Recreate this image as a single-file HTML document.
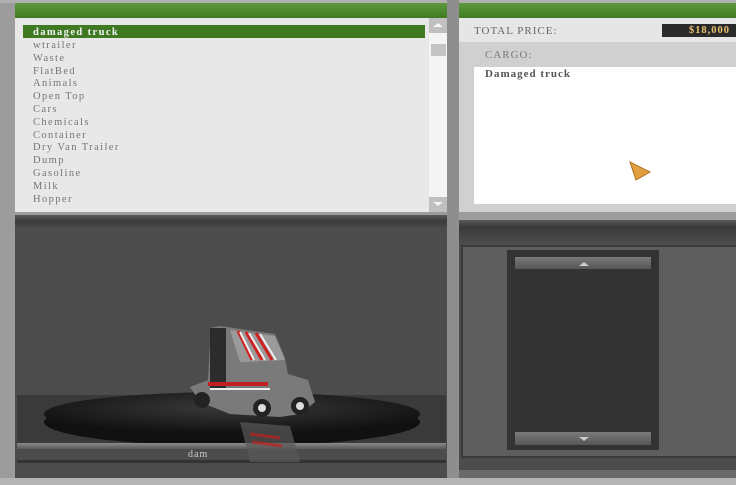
<!DOCTYPE html>
<html><head><style>
*{margin:0;padding:0;box-sizing:border-box}
body{width:736px;height:485px;overflow:hidden;background:#9c9c9c;position:relative;font-family:"Liberation Serif",serif}
div{position:absolute}
.t{font-size:10.5px;letter-spacing:1.4px;color:#767676;left:33px;line-height:12.8px}
</style></head><body>
<div style="left:0;top:0;width:736px;height:3px;background:#b0b0b0"></div>
<div style="left:15px;top:3px;width:432px;height:15px;background:linear-gradient(#5e9a3c,#3f7a22)"></div>
<div style="left:459px;top:3px;width:277px;height:15px;background:linear-gradient(#5e9a3c,#3f7a22)"></div>
<div style="left:447px;top:0;width:12px;height:485px;background:#8e8e8e"></div>
<div style="left:15px;top:18px;width:414px;height:194px;background:#e8e8e8"></div>
<div style="left:23px;top:25px;width:402px;height:13px;background:#3f7a22"></div>
<div class="t" style="top:27px;color:#f2f2f2;font-weight:bold">damaged truck</div>
<div class="t" style="top:40px">wtrailer<br>Waste<br>FlatBed<br>Animals<br>Open Top<br>Cars<br>Chemicals<br>Container<br>Dry Van Trailer<br>Dump<br>Gasoline<br>Milk<br>Hopper</div>
<div style="left:429px;top:18px;width:18px;height:194px;background:#f4f4f4"></div>
<div style="left:429px;top:18px;width:18px;height:15px;background:#c0c0c0"></div>
<div style="left:433px;top:23px;width:0;height:0;border:5px solid transparent;border-bottom:4px solid #f4f4f4;border-top:0"></div>
<div style="left:431px;top:44px;width:15px;height:12px;background:#c4c4c4"></div>
<div style="left:429px;top:197px;width:18px;height:15px;background:#c0c0c0"></div>
<div style="left:433px;top:202px;width:0;height:0;border:5px solid transparent;border-top:4px solid #f4f4f4;border-bottom:0"></div>
<div style="left:459px;top:18px;width:277px;height:24px;background:#e6e6e6"></div>
<div style="left:474px;top:25px;font-size:11px;letter-spacing:1px;color:#666">TOTAL PRICE:</div>
<div style="left:662px;top:24px;width:74px;height:13px;background:#2a2a2a;color:#e8c070;font-size:10.5px;letter-spacing:1px;text-align:right;padding-right:6px;line-height:13px;font-weight:bold">$18,000</div>
<div style="left:459px;top:42px;width:277px;height:170px;background:#d0d0d0"></div>
<div style="left:485px;top:49px;font-size:11px;letter-spacing:1px;color:#777">CARGO:</div>
<div style="left:474px;top:67px;width:262px;height:137px;background:#fff"></div>
<div style="left:485px;top:68px;font-size:11px;letter-spacing:1px;color:#555;font-weight:bold">Damaged truck</div>
<svg style="position:absolute;left:628px;top:160px" width="26" height="22"><path d="M2 2 L22 12 L8 20 Z" fill="#e0a040" stroke="#b07020"/></svg>
<div style="left:15px;top:215px;width:432px;height:15px;background:linear-gradient(#5a5a5a,#3a3a3a 40%,#505050)"></div>
<div style="left:15px;top:230px;width:432px;height:248px;background:#4c4c4c"></div>
<div style="left:17px;top:395px;width:429px;height:50px;background:#3a3a3a"></div>
<svg style="position:absolute;left:40px;top:388px" width="384" height="60"><defs><radialGradient id="g" cx="50%" cy="35%" r="60%"><stop offset="0" stop-color="#3a3a3a"/><stop offset="1" stop-color="#101010"/></radialGradient></defs><ellipse cx="192" cy="34" rx="188" ry="24" fill="#111"/><ellipse cx="192" cy="26" rx="188" ry="22" fill="url(#g)"/></svg>
<div style="left:17px;top:443px;width:429px;height:6px;background:linear-gradient(#8a8a8a,#5a5a5a)"></div>
<div style="left:17px;top:460px;width:429px;height:3px;background:#333"></div>
<div style="left:188px;top:449px;font-size:10px;color:#ccc;letter-spacing:1px">dam</div>
<svg style="position:absolute;left:180px;top:322px" width="140" height="145">
<path d="M30 6 L40 4 L95 12 L105 36 L108 52 L128 58 L135 80 L120 92 L100 95 L50 92 L20 80 L10 65 L28 58 L30 20 Z" fill="#7a7a7a"/>
<path d="M50 8 L95 14 L105 38 L60 40 Z" fill="#9a9a9a"/>
<path d="M58 9 L72 38 M66 10 L82 38 M76 11 L92 38" stroke="#d02020" stroke-width="3"/>
<path d="M60 10 L74 38 M69 11 L85 38 M80 12 L96 38" stroke="#eee" stroke-width="2"/>
<rect x="30" y="6" width="16" height="60" fill="#2c2c2c"/>
<rect x="28" y="60" width="60" height="4" fill="#c02020"/>
<rect x="30" y="66" width="60" height="2" fill="#eee"/>
<circle cx="22" cy="78" r="8" fill="#222"/><circle cx="82" cy="86" r="9" fill="#222"/><circle cx="120" cy="84" r="9" fill="#222"/>
<circle cx="82" cy="86" r="4" fill="#ddd"/><circle cx="120" cy="84" r="4" fill="#ddd"/>
<path d="M60 100 L110 104 L120 140 L70 140 Z" fill="#5a5a5a" opacity=".7"/>
<path d="M70 112 L100 116 M72 120 L102 124" stroke="#c02020" stroke-width="3" opacity=".7"/>
</svg>
<div style="left:459px;top:220px;width:277px;height:23px;background:linear-gradient(#5a5a5a,#3a3a3a 30%,#4c4c4c)"></div>
<div style="left:459px;top:243px;width:277px;height:235px;background:#4c4c4c"></div>
<div style="left:461px;top:245px;width:275px;height:213px;border:2px solid #3a3a3a;border-right:0;background:#5e5e5e"></div>
<div style="left:507px;top:250px;width:152px;height:200px;background:#333"></div>
<div style="left:515px;top:257px;width:136px;height:12px;background:linear-gradient(#7a7a7a,#555)"></div>
<div style="left:579px;top:262px;border:5px solid transparent;border-bottom:4px solid #ccc;border-top:0"></div>
<div style="left:515px;top:432px;width:136px;height:13px;background:linear-gradient(#7a7a7a,#555)"></div>
<div style="left:579px;top:437px;border:5px solid transparent;border-top:4px solid #ccc;border-bottom:0"></div>
<div style="left:459px;top:470px;width:277px;height:8px;background:#6a6a6a"></div>
<div style="left:0;top:478px;width:736px;height:7px;background:#b4b4b4"></div>
</body></html>
